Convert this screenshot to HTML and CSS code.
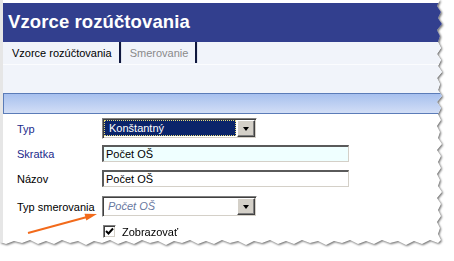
FILE: index.html
```html
<!DOCTYPE html>
<html lang="sk">
<head>
    <meta charset="UTF-8">
    <title>Vzorce rozúčtovania</title>
    <link rel="stylesheet" href="styles.css">
</head>
<body>
    <div class="paper">
      <div class="sheet">
        <!-- hlavicka -->
        <div class="title">Vzorce rozúčtovania</div>

        <!-- zalozky -->
        <div class="tabs">
          <span class="tab on">Vzorce rozúčtovania</span>
          <span class="tab">Smerovanie</span>
        </div>
        <div class="gap"></div>
        <div class="band"></div>

        <!-- formular -->
        <div class="form">
          <div class="row">
            <span class="lbl blue">Typ</span>
            <div class="combo">
              <span class="val sel">Konštantný</span>
              <span class="btn"><i class="tri"></i></span>
            </div>
          </div>
          <div class="row">
            <span class="lbl blue">Skratka</span>
            <div class="inp cyan">Počet OŠ</div>
          </div>
          <div class="row">
            <span class="lbl">Názov</span>
            <div class="inp">Počet OŠ</div>
          </div>
          <div class="row r4">
            <span class="lbl">Typ smerovania</span>
            <div class="combo">
              <span class="val dim">Počet OŠ</span>
              <span class="btn"><i class="tri"></i></span>
            </div>
          </div>
          <div class="row">
            <span class="lbl"></span>
            <span class="chk">
              <svg width="9" height="9" viewBox="0 0 9 9"><path d="M1 4 L3.5 6.5 L8 1.5" fill="none" stroke="#000" stroke-width="2"/></svg>
            </span>
            <span class="chktxt">Zobrazovať</span>
          </div>
        </div>
      </div>

      <!-- oranzova sipka (poznamka) -->
      <svg class="arrow" width="454" height="261" viewBox="0 0 454 261">
        <line x1="28" y1="233" x2="87" y2="217" stroke="#f26a1b" stroke-width="2"/>
        <polygon points="97,214 86.3,220.6 84.5,213.8" fill="#f26a1b"/>
      </svg>
    </div>
</body>
</html>
```

FILE: styles.css
```css
body{
  margin: 0;
  background: #fff;
  font-family: "Liberation Sans", Arial, sans-serif;
  font-size: 11px;
}

.paper{
  position: relative;
  width: 454px;
  height: 261px;
  filter: drop-shadow(1px 1px 1px rgba(0,0,0,.6));
}

/* roztrhnuty okraj vpravo a dole */
.sheet{
  width: 443px;
  height: 246px;
  background: #fff;
  border-left: 3px solid #e6e6e6;
  box-sizing: border-box;
  padding-top: 3px;
  clip-path: polygon(0 0, 440px 0, 437px 6px, 441px 12px, 438px 18px, 442px 24px, 437px 30px, 440px 36px, 438px 42px, 441px 48px, 437px 54px, 441px 60px, 438px 66px, 442px 72px, 437px 78px, 440px 84px, 438px 90px, 442px 96px, 437px 102px, 441px 108px, 438px 114px, 441px 120px, 437px 126px, 440px 132px, 438px 138px, 442px 144px, 437px 150px, 441px 156px, 438px 162px, 441px 168px, 437px 174px, 440px 180px, 438px 186px, 442px 192px, 437px 198px, 441px 204px, 438px 210px, 441px 216px, 437px 222px, 440px 228px, 438px 234px, 441px 240px, 438px 243px, 430px 240px, 422px 244px, 414px 241px, 406px 245px, 398px 241px, 390px 243px, 382px 240px, 374px 244px, 366px 241px, 358px 244px, 350px 240px, 342px 243px, 334px 241px, 326px 245px, 318px 241px, 310px 243px, 302px 240px, 294px 244px, 286px 241px, 278px 244px, 270px 240px, 262px 243px, 254px 241px, 246px 245px, 238px 241px, 230px 243px, 222px 240px, 214px 244px, 206px 241px, 198px 244px, 190px 240px, 182px 243px, 174px 241px, 166px 245px, 158px 241px, 150px 243px, 142px 240px, 134px 244px, 126px 241px, 118px 244px, 110px 240px, 102px 243px, 94px 241px, 86px 245px, 78px 241px, 70px 243px, 62px 240px, 54px 244px, 46px 241px, 38px 244px, 30px 240px, 22px 243px, 14px 241px, 6px 244px, 0 242px);
}

.title{
  height: 39px;
  line-height: 37px;
  padding-left: 5px;
  background: #323f8e;
  color: #fff;
  font-size: 18.5px;
  font-weight: bold;
  letter-spacing: 0.1px;
}

.tabs{
  display: flex;
  height: 22px;
  line-height: 22px;
  background: #f1f4fa;
  border-bottom: 1px solid #fbfcfe;
}
.tab{
  padding: 0 7px 0 9px;
  color: #8a8a8a;
  border-right: 2px solid #10183e;
  box-shadow: 1px 0 0 #dfe4ee;
  height: 21px;
}
.tab.on{
  color: #000;
}

.gap{
  height: 28px;
  background: #f1f4fa;
}

.band{
  height: 19px;
  border: 1px solid #5b7cb8;
  background: linear-gradient(#a7c0ee, #d2def6);
}

.form{
  padding: 2px 0 0 14px;
}
.row{
  display: flex;
  align-items: center;
  height: 25px;
}
.row.r4{
  margin-top: 3px;
}
.lbl{
  width: 85px;
  flex: none;
}
.blue{
  color: #1c2b8c;
}

/* kombo box */
.combo{
  display: flex;
  width: 155px;
  height: 21px;
  box-sizing: border-box;
  border-top: 1px solid #808080;
  border-left: 1px solid #808080;
  border-right: 1px solid #fff;
  border-bottom: 1px solid #fff;
  box-shadow: inset 1px 1px 0 #404040, inset -1px -1px 0 #d4d0c8;
  padding: 1px 1px 2px 1px;
  background: #fff;
}
.val{
  flex: 1;
  line-height: 15px;
  padding-left: 4px;
}
.val.sel{
  background: #0a246a;
  color: #fff;
  border: 1px dotted #e6dc7a;
  margin-right: 1px;
}
.val.dim{
  color: #6878a0;
  font-style: italic;
  padding-top: 1px;
}
.btn{
  width: 16px;
  height: 15px;
  background: #d4d0c8;
  border-top: 1px solid #fff;
  border-left: 1px solid #fff;
  border-right: 1px solid #404040;
  border-bottom: 1px solid #404040;
  box-shadow: inset -1px -1px 0 #808080;
  display: flex;
  align-items: center;
  justify-content: center;
}
.tri{
  width: 0;
  height: 0;
  border-left: 3.5px solid transparent;
  border-right: 3.5px solid transparent;
  border-top: 4px solid #000;
}

/* textove pole */
.inp{
  width: 247px;
  height: 17px;
  box-sizing: border-box;
  border-top: 2px solid #5a5a5a;
  border-left: 2px solid #5a5a5a;
  border-right: 1px solid #d4d0c8;
  border-bottom: 1px solid #d4d0c8;
  background: #fff;
  line-height: 14px;
  padding-left: 2px;
}
.inp.cyan{
  background: #efffff;
}

/* checkbox */
.chk{
  width: 13px;
  height: 13px;
  box-sizing: border-box;
  margin-left: 1px;
  border-top: 1px solid #808080;
  border-left: 1px solid #808080;
  border-right: 1px solid #fff;
  border-bottom: 1px solid #fff;
  box-shadow: inset 1px 1px 0 #404040, inset -1px -1px 0 #d4d0c8;
  background: #fff;
  display: flex;
  align-items: center;
  justify-content: center;
}
.chktxt{
  margin-left: 6px;
}

.arrow{
  position: absolute;
  top: 0;
  left: 0;
}
```
